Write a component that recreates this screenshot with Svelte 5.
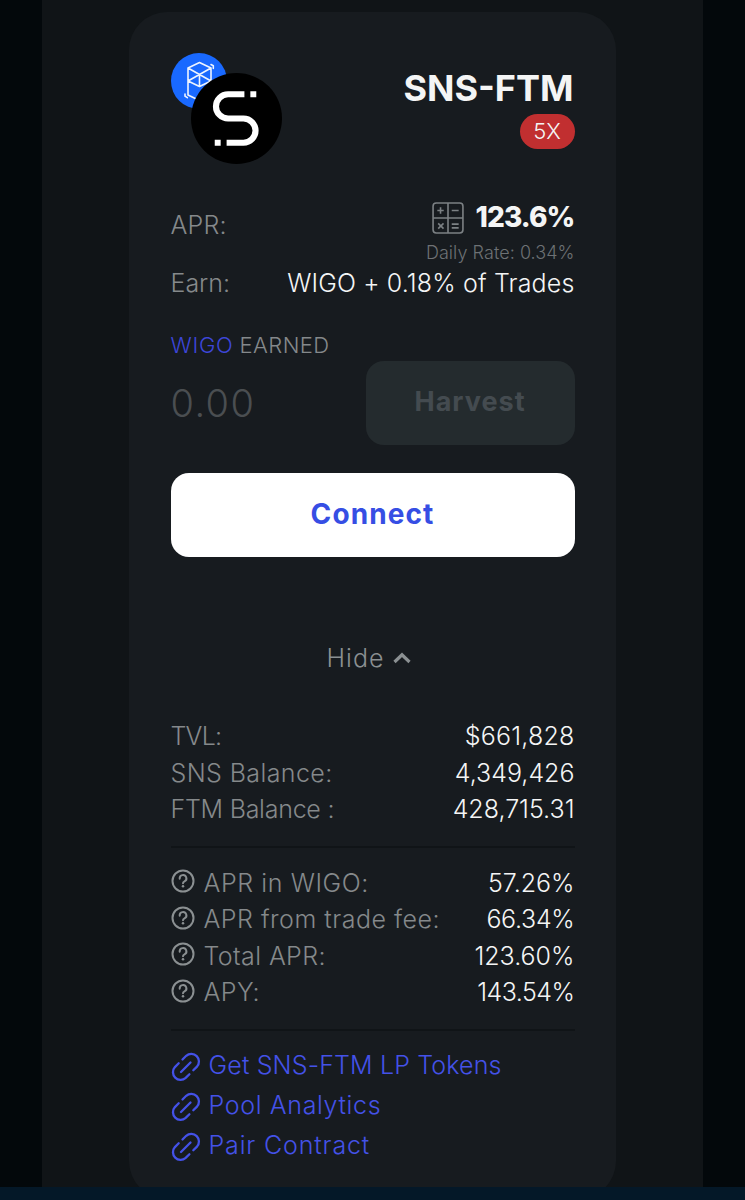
<script>
    const balances = [
        { label: "TVL:", value: "$661,828", fit: "tvl" },
        { label: "SNS Balance:", value: "4,349,426", fit: "sns" },
        { label: "FTM Balance :", value: "428,715.31", fit: "ftm" }
    ];

    const rates = [
        { label: "APR in WIGO:", value: "57.26%", fit: "wigo-apr" },
        { label: "APR from trade fee:", value: "66.34%", fit: "fee-apr" },
        { label: "Total APR:", value: "123.60%", fit: "total-apr" },
        { label: "APY:", value: "143.54%", fit: "apy" }
    ];

    const links = [
        { text: "Get SNS-FTM LP Tokens", fit: "get" },
        { text: "Pool Analytics", fit: "pool" },
        { text: "Pair Contract", fit: "pair" }
    ];

    let expanded = $state(true);
</script>

<div class="page">
    <main class="panel">
        <section class="card">
            <header class="heading">
                <div class="tokens">
                    <svg class="token-ftm" viewBox="0 0 56 56" fill="none">
                        <circle cx="28" cy="28" r="28" fill="#1969ff" />
                        <g stroke="#eef4ff" stroke-width="1.6" stroke-linejoin="round" stroke-linecap="round">
                            <path d="M17 15 28.5 9.5 40 15V28L28.5 33.5 17 28ZM17 15 28.5 21.5 40 15M28.5 21.5V33.5M17 28 28.5 21.5 40 28M17 28V42L28.5 47.5" />
                            <path d="M40 11.5 42.3 12.8V15.5M14 41V43.2L16.3 44.7" />
                        </g>
                    </svg>
                    <svg class="token-sns" viewBox="0 0 92 92" fill="none">
                        <circle cx="46" cy="46" r="46" fill="#000" />
                        <path d="M54 21.5H37.5A12.25 12.25 0 0 0 37.500 46H53A12.250 12.250 0 0 1 53 70.500H36" stroke="#fff" stroke-width="6.200" />
                        <path d="M60 18.500H66V24.500H60ZM24 67.500H30V73.500H24Z" fill="#fff" />
                    </svg>
                </div>
                <div class="title">
                    <h1>SNS-FTM</h1>
                    <span class="badge">5X</span>
                </div>
            </header>

            <div class="row apr-row">
                <span class="label apr-label">APR:</span>
                <div class="apr">
                    <div class="apr-value">
                        <svg class="calculator" viewBox="0 0 30 30" fill="none" stroke="#7c8184" stroke-width="1.5">
                            <rect x="1" y="1" width="28" height="28" rx="3" />
                            <path d="M15 1V29M1 15H29M5 8H11M8 5V11M18.5 8H25M5.8 20 10.8 25M10.8 20 5.8 25M18.5 20.7H25M18.5 24.3H25" />
                        </svg>
                        <strong>123.6%</strong>
                    </div>
                    <small>Daily Rate: 0.34%</small>
                </div>
            </div>
            <div class="row earn-row">
                <span class="label earn-label">Earn:</span>
                <span class="value earn-value">WIGO + 0.18% of Trades</span>
            </div>

            <p class="earned"><span class="wigo">WIGO</span> <span class="earned-text">EARNED</span></p>
            <div class="row harvest-row">
                <span class="amount">0.00</span>
                <button class="harvest" disabled>Harvest</button>
            </div>
            <button class="connect">Connect</button>

            <button class="toggle" onclick={() => expanded = !expanded}>
                <span>{expanded ? "Hide" : "Details"}</span>
                <svg class:closed={!expanded} viewBox="0 0 18 12" fill="none" stroke="#8b9092" stroke-width="3.2">
                    <path d="M1.5 10 9 2.8 16.5 10" />
                </svg>
            </button>

            {#if expanded}
                <div class="details">
                    {#each balances as item}
                        <div class="row {item.fit}">
                            <span class="label">{item.label}</span>
                            <span class="value">{item.value}</span>
                        </div>
                    {/each}
                    <hr />
                    {#each rates as item}
                        <div class="row {item.fit}">
                            <div class="hint">
                                <svg viewBox="0 0 24 24" fill="none" stroke="#8b9092" stroke-width="2">
                                    <circle cx="12" cy="12" r="10.5" />
                                    <path d="M8.7 9.7A3.35 3.35 0 1 1 13.5 12.4Q12 13.1 12 14.3" stroke-linecap="round" />
                                    <circle cx="12" cy="17.2" r="1.25" fill="#8b9092" stroke="none" />
                                </svg>
                                <span class="label">{item.label}</span>
                            </div>
                            <span class="value">{item.value}</span>
                        </div>
                    {/each}
                    <hr />
                    {#each links as link}
                        <a class="link {link.fit}" href="#{link.fit}">
                            <svg viewBox="0 0 30 30" fill="none" stroke="#4452e8" stroke-width="2.3" stroke-linecap="round">
                                <path d="M10 20 19.5 10.5" />
                                <path d="M11.5 7.5 15.2 3.8A7.65 7.65 0 0 1 26 14.6L22.3 18.3" />
                                <path d="M7.7 11.3 3.9 15.1A7.65 7.65 0 0 0 14.7 25.9L18.4 22.2" />
                            </svg>
                            <span>{link.text}</span>
                        </a>
                    {/each}
                </div>
            {/if}
        </section>
    </main>
    <footer></footer>
</div>

<style>
    :global(body) {
        background: #03080b;
    }

    .page {
        height: 1200px;
        display: flex;
        flex-direction: column;
        overflow: hidden;
        font-family: Inter, "Liberation Sans", sans-serif;
        font-size: 25px;
        font-weight: 300;
        color: #f4f5f5;
        white-space: nowrap;
    }

    .panel {
        width: 661px;
        height: 1187px;
        margin-left: 42px;
        padding: 12px 87px 0;
        box-sizing: border-box;
        background: #101417;
        overflow: hidden;
    }

    footer {
        flex: 1;
        background: #041828;
    }

    .card {
        height: 1187px;
        padding: 41px 41.5px 0;
        box-sizing: border-box;
        border-radius: 38px;
        background: #171b1f;
    }

    .heading {
        display: flex;
        justify-content: space-between;
        height: 113px;
    }

    .tokens {
        position: relative;
        width: 112px;
    }

    .token-ftm {
        position: absolute;
        left: 0;
        top: 0;
        width: 56px;
    }

    .token-sns {
        position: absolute;
        left: 20px;
        top: 20px;
        width: 91px;
    }

    .title {
        display: flex;
        flex-direction: column;
        align-items: flex-end;
    }

    h1 {
        margin: 13px 1px 4px 0;
        font-size: 36px;
        line-height: 44px;
        font-weight: 700;
    }

    .badge {
        width: 55px;
        height: 35px;
        border-radius: 18px;
        background: #c12f30;
        font-size: 22px;
        line-height: 35px;
        text-align: center;
    }

    .row {
        display: flex;
        align-items: center;
        justify-content: space-between;
        height: 36.5px;
    }

    .label {
        color: #85898b;
    }

    .apr-row {
        height: 68px;
        margin-top: 32px;
        align-items: flex-start;
    }

    .apr-label {
        margin-top: 12px;
        letter-spacing: 0.2px;
    }

    .apr {
        display: flex;
        flex-direction: column;
        align-items: flex-end;
    }

    .apr-value {
        display: flex;
        align-items: center;
        gap: 12px;
        height: 38px;
        margin-bottom: 2px;
    }

    .calculator {
        width: 32px;
        margin-top: 2px;
    }

    strong {
        font-size: 28px;
        font-weight: 800;
        line-height: 36px;
        letter-spacing: -0.9px;
    }

    small {
        color: #6d7174;
        font-size: 18px;
        line-height: 30px;
        letter-spacing: 0.05px;
    }

    .earn-row {
        height: 34px;
    }

    .earn-value {
        letter-spacing: 0.15px;
    }

    .earned {
        margin: 29px 0 0;
        font-size: 22px;
        line-height: 32px;
        color: #85898b;
    }

    .wigo {
        color: #3d46d8;
        letter-spacing: 0.7px;
    }

    .earned-text {
        letter-spacing: 0.4px;
    }

    .harvest-row {
        height: 84px;
    }

    .amount {
        color: #4a4e51;
        font-size: 38px;
        letter-spacing: 1.4px;
        margin-bottom: 1px;
    }

    button {
        padding: 0;
        border: 0;
        font-family: inherit;
    }

    .harvest {
        width: 209px;
        height: 84px;
        padding-bottom: 3px;
        border-radius: 18px;
        background: #242b2e;
        color: #444b50;
        font-size: 27px;
        font-weight: 700;
        letter-spacing: 1px;
    }

    .connect {
        display: block;
        width: 404px;
        height: 84px;
        margin-top: 28px;
        padding-bottom: 3px;
        border-radius: 18px;
        background: #fff;
        color: #364ee4;
        font-size: 28px;
        font-weight: 700;
        letter-spacing: 1.1px;
    }

    .toggle {
        display: flex;
        align-items: center;
        gap: 9px;
        height: 40px;
        margin: 81px auto 0;
        padding-right: 7px;
        background: none;
        color: #8b9092;
        font-size: 25px;
        font-weight: 300;
        letter-spacing: 1px;
    }

    .toggle svg {
        width: 18px;
    }

    .toggle svg.closed {
        transform: rotate(180deg);
    }

    .details {
        margin-top: 40px;
    }

    hr {
        height: 2px;
        margin: 18px 0 17px;
        border: 0;
        background: #101417;
    }

    .hint {
        display: flex;
        align-items: center;
        gap: 9px;
    }

    .hint svg {
        width: 24px;
        margin-bottom: 3px;
    }

    /* tracking per line */
    .tvl .label {
        letter-spacing: -0.8px;
    }

    .tvl .value {
        letter-spacing: 0.2px;
    }

    .sns .label {
        letter-spacing: 0.4px;
    }

    .ftm .label {
        letter-spacing: -0.25px;
    }

    .wigo-apr .label {
        letter-spacing: 0.6px;
    }

    .fee-apr .label {
        letter-spacing: 0.5px;
    }

    .fee-apr .value {
        letter-spacing: -0.3px;
    }

    .total-apr .label {
        letter-spacing: 0.4px;
    }

    .apy .label {
        letter-spacing: 0.5px;
    }

    .apy .value {
        letter-spacing: -0.5px;
    }

    .link {
        display: flex;
        align-items: center;
        gap: 8px;
        height: 40px;
        color: #4452e8;
        text-decoration: none;
    }

    .link svg {
        width: 30px;
    }

    .link span {
        margin-bottom: 4px;
        letter-spacing: 0.15px;
    }

    .link.pool span {
        letter-spacing: 0.65px;
    }

    .link.pair span {
        letter-spacing: 0.85px;
    }

    .link:first-of-type {
        margin-top: -1px;
    }
</style>
